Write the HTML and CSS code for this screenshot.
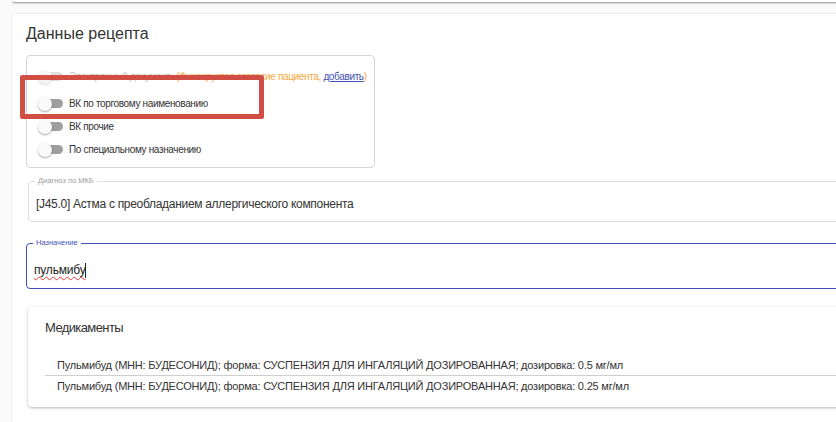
FILE: index.html
```html
<!DOCTYPE html>
<html lang="ru">
<head>
    <meta charset="UTF-8">
    <meta name="viewport" content="width=device-width, initial-scale=1.0">
    <title>Данные рецепта</title>
    <link rel="stylesheet" href="styles.css">
</head>
<body>
    <div class="card card-prev"></div>

    <div class="card recipe">
        <h2 class="recipe-title">Данные рецепта</h2>

        <div class="options">
            <div class="option option-first disabled">
                <span class="switch"><span class="thumb"></span></span>
                <span class="label">Электронный документ</span>
                <span class="warn">(Фиксируется согласие пациента, <a href="#">добавить</a>)</span>
            </div>
            <div class="option">
                <span class="switch"><span class="thumb"></span></span>
                <span class="label">ВК по торговому наименованию</span>
            </div>
            <div class="option">
                <span class="switch"><span class="thumb"></span></span>
                <span class="label">ВК прочие</span>
            </div>
            <div class="option">
                <span class="switch"><span class="thumb"></span></span>
                <span class="label">По специальному назначению</span>
            </div>
        </div>

        <fieldset class="field field-diag">
            <legend>Диагноз по МКБ</legend>
            <div class="field-value">[J45.0] Астма с преобладанием аллергического компонента</div>
        </fieldset>

        <fieldset class="field field-focus">
            <legend>Назначение</legend>
            <div class="field-value field-input"><span class="typo">пульмибу</span><span class="caret"></span></div>
        </fieldset>

        <div class="card meds">
            <div class="meds-title">Медикаменты</div>
            <ul class="meds-list">
                <li>Пульмибуд (МНН: БУДЕСОНИД); форма: СУСПЕНЗИЯ ДЛЯ ИНГАЛЯЦИЙ ДОЗИРОВАННАЯ; дозировка: 0.5 мг/мл</li>
                <li>Пульмибуд (МНН: БУДЕСОНИД); форма: СУСПЕНЗИЯ ДЛЯ ИНГАЛЯЦИЙ ДОЗИРОВАННАЯ; дозировка: 0.25 мг/мл</li>
            </ul>
        </div>
    </div>

    <!-- annotation frame drawn over the screenshot -->
    <div class="mark"></div>
</body>
</html>
```

FILE: styles.css
```css
html, body {
    overflow: hidden;
}
body {
    margin: 0;
    padding: 0 0 0 12px;
    background: #fafafa;
    font-family: "Liberation Sans", Arial, sans-serif;
    color: #333;
    position: relative;
}
.card {
    background: #fff;
    border-radius: 4px;
}
.card-prev {
    width: 900px;
    height: 2px;
    border-radius: 0 0 4px 4px;
    box-shadow: 0 1px 2px rgba(0, 0, 0, 0.45);
}
.recipe {
    width: 900px;
    margin-top: 12px;
    padding: 12px 0 60px 14px;
    box-shadow: 0 0 2px rgba(0, 0, 0, 0.12);
}
.recipe-title {
    margin: 0 0 13px;
    font-size: 16px;
    font-weight: normal;
    line-height: 16px;
    color: #333;
}

.options {
    width: 325px;
    height: 102px;
    padding: 9px 11px 0;
    border: 1px solid #d4d4d4;
    border-radius: 4px;
}
.option {
    display: flex;
    align-items: center;
    height: 23px;
    font-size: 10px;
    letter-spacing: -0.35px;
    white-space: nowrap;
}
.option-first {
    margin-bottom: 4px;
}
.switch {
    display: flex;
    align-items: center;
    flex: none;
    width: 23px;
    height: 9px;
    margin: 0 6px 0 2px;
    background: #9e9e9e;
    border-radius: 5px;
}
.thumb {
    width: 14px;
    height: 14px;
    margin-left: -2px;
    border-radius: 50%;
    background: #fafafa;
    box-shadow: 0 1px 2px rgba(0, 0, 0, 0.35);
}
.disabled .switch {
    background: #e0e0e0;
}
.disabled .thumb {
    background: #f5f5f5;
    box-shadow: 0 1px 2px rgba(0, 0, 0, 0.15);
}
.disabled .label {
    color: #bdbdbd;
}
.warn {
    margin-left: 6px;
    color: #f5a940;
}
.warn a {
    color: #3f51b5;
}

.field {
    box-sizing: border-box;
    margin: 8px 0 0;
    padding: 0 7px;
    border: 1px solid #dedede;
    border-radius: 4px;
}
.field legend {
    padding: 0 3px;
    margin-left: -1px;
    font-size: 7.5px;
    line-height: 10px;
    color: #9e9e9e;
}
.field-diag {
    margin-left: 2px;
    height: 46px;
}
.field-diag .field-value {
    padding-top: 11px;
    font-size: 12px;
    line-height: 14px;
    letter-spacing: -0.3px;
}
.field-focus {
    margin-top: 16px;
    height: 51px;
    border-color: #3f51b5;
}
.field-focus legend {
    color: #3f51b5;
}
.field-input {
    display: flex;
    align-items: center;
    padding-top: 14px;
    font-size: 12px;
    line-height: 16px;
    letter-spacing: -0.2px;
    color: #222;
}
.typo {
    text-decoration: underline wavy #e53935;
    text-decoration-thickness: 1px;
    text-underline-offset: 2px;
}
.caret {
    width: 1px;
    height: 15px;
    background: #222;
}

.meds {
    margin: 18px 0 0 2px;
    padding: 13px 0 11px 17px;
    box-shadow: 0 1px 3px rgba(0, 0, 0, 0.28);
}
.meds-title {
    font-size: 13px;
    line-height: 16px;
    letter-spacing: -0.6px;
}
.meds-list {
    list-style: none;
    margin: 19px 0 0;
    padding: 0;
}
.meds-list li {
    height: 20px;
    padding-left: 12px;
    font-size: 11px;
    line-height: 20px;
    letter-spacing: -0.2px;
}
.meds-list li:first-child {
    border-bottom: 1px solid #cfcfcf;
}

.mark {
    position: absolute;
    left: 20px;
    top: 75px;
    width: 244px;
    height: 44px;
    box-sizing: border-box;
    border: 5px solid #d14e44;
    border-radius: 2px;
}
```
